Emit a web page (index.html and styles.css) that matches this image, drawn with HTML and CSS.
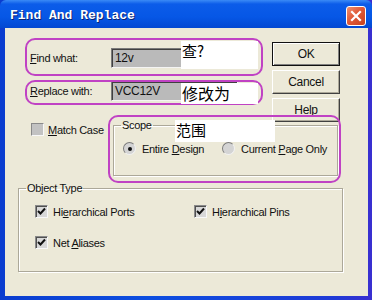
FILE: index.html
```html
<!DOCTYPE html>
<html lang="en">
<head>
  <meta charset="UTF-8" />
  <meta name="viewport" content="width=device-width, initial-scale=1.0"/>
  <title>Find And Replace</title>
  <link rel="stylesheet" href="styles.css">
</head>
<body>
  <div class="window">
    <div class="titlebar">
      <span class="title">Find And Replace</span>
      <span class="close">
        <svg width="12" height="12" viewBox="0 0 12 12"><path d="M2 2 L10 10 M10 2 L2 10" stroke="#fff" stroke-width="2.2" stroke-linecap="square"/></svg>
      </span>
    </div>

    <div class="client">
      <div class="top">
        <div class="fields">
          <div class="row">
            <span class="label"><u>F</u>ind what:</span>
            <div class="textbox">12v</div>
          </div>
          <div class="row">
            <span class="label"><u>R</u>eplace with:</span>
            <div class="textbox">VCC12V</div>
          </div>
        </div>
        <div class="buttons">
          <div class="btn default">OK</div>
          <div class="btn">Cancel</div>
          <div class="btn"><u>H</u>elp</div>
        </div>
      </div>

      <div class="middle">
        <div class="check match"><span class="box"></span><span><u>M</u>atch Case</span></div>
        <fieldset class="scope">
          <legend>Scope</legend>
          <div class="radios">
            <div class="radio first"><span class="dot on"></span><span>Entire <u>D</u>esign</span></div>
            <div class="radio"><span class="dot"></span><span>Current <u>P</u>age Only</span></div>
          </div>
        </fieldset>
      </div>

      <fieldset class="objtype">
        <legend>Object Type</legend>
        <div class="checks">
          <div class="check"><span class="box ticked"><svg width="9" height="9" viewBox="0 0 9 9"><path d="M1 4 L3.5 6.5 L8 1.5" fill="none" stroke="#111" stroke-width="2"/></svg></span><span>Hi<u>e</u>rarchical Ports</span></div>
          <div class="check"><span class="box ticked"><svg width="9" height="9" viewBox="0 0 9 9"><path d="M1 4 L3.5 6.5 L8 1.5" fill="none" stroke="#111" stroke-width="2"/></svg></span><span>H<u>i</u>erarchical Pins</span></div>
          <div class="check"><span class="box ticked"><svg width="9" height="9" viewBox="0 0 9 9"><path d="M1 4 L3.5 6.5 L8 1.5" fill="none" stroke="#111" stroke-width="2"/></svg></span><span>Net <u>A</u>liases</span></div>
        </div>
      </fieldset>
    </div>

    <!-- hand-drawn notes over the dialog -->
    <div class="mark mark1"></div>
    <div class="mark mark2"></div>
    <div class="mark mark3"></div>
    <div class="tag tag1">查?</div>
    <div class="tag tag2">修改为</div>
    <div class="tag tag3">范围</div>
  </div>
</body>
</html>
```

FILE: styles.css
```css
body {
  margin: 0;
  font-family: "Liberation Sans", Arial, sans-serif;
  font-size: 11px;
  letter-spacing: -0.3px;
  color: #111;
  background: #fff;
}

.window {
  position: relative;
  width: 372px;
  height: 300px;
  box-sizing: border-box;
  padding: 0 4px 4px 5px;
  display: flex;
  flex-direction: column;
  background: linear-gradient(to right, #0a3ccf, #0c4ee0 40%, #1f3ad6 90%, #3a2fd0);
}

.titlebar {
  height: 28px;
  margin: 0 -4px 0 -5px;
  padding: 0 6px 0 10px;
  display: flex;
  align-items: center;
  justify-content: space-between;
  background: linear-gradient(to bottom, #3a8af6 0, #0c5ce9 4px, #0657e6 60%, #0348d2 100%);
  border-radius: 6px 6px 0 0;
}

.title {
  font-family: "Liberation Mono", "Courier New", monospace;
  font-weight: bold;
  font-size: 13px;
  letter-spacing: 0;
  color: #fff;
  text-shadow: 1px 1px 0 #0a2470;
  margin-top: 2px;
}

.close {
  width: 20px;
  height: 20px;
  box-sizing: border-box;
  margin-top: 4px;
  border: 1px solid #fff;
  border-radius: 3px;
  background: linear-gradient(135deg, #f0906e, #e05a38 45%, #c8401e);
  display: flex;
  align-items: center;
  justify-content: center;
}

.client {
  flex: 1;
  background: #ece9d8;
}

.top {
  display: flex;
}

.fields {
  width: 267px;
  padding: 20px 0 0 25px;
  box-sizing: border-box;
}

.row {
  display: flex;
  align-items: center;
  height: 20px;
}

.row + .row {
  margin-top: 13px;
}

.label {
  width: 81px;
}

.textbox {
  width: 127px;
  height: 20px;
  box-sizing: border-box;
  padding: 0 3px;
  display: flex;
  align-items: center;
  font-size: 12px;
  background: #bababa;
  border: 1px solid;
  border-color: #7a7a7a #f4f4f4 #f4f4f4 #7a7a7a;
  box-shadow: inset 1px 1px 0 #404040;
}

.buttons {
  padding-top: 14px;
  display: flex;
  flex-direction: column;
  gap: 4px;
}

.btn {
  width: 68px;
  height: 24px;
  box-sizing: border-box;
  display: flex;
  align-items: center;
  justify-content: center;
  font-size: 12px;
  background: #ece9d8;
  border: 1px solid;
  border-color: #fff #404040 #404040 #fff;
  box-shadow: inset -1px -1px 0 #aca899;
}

.btn.default {
  border: 1px solid #111;
  box-shadow: inset 1px 1px 0 #fff, inset -1px -1px 0 #808080;
}

.middle {
  display: flex;
  align-items: flex-start;
  margin-top: -3px;
}

.check {
  display: flex;
  align-items: center;
  gap: 5px;
  height: 13px;
}

.match {
  width: 82px;
  margin: 4px 0 0 26px;
  gap: 4px;
}

.box {
  width: 13px;
  height: 13px;
  box-sizing: border-box;
  flex: none;
  display: flex;
  align-items: center;
  justify-content: center;
  background: #c2c2c2;
  border: 1px solid;
  border-color: #8a8a8a #f8f8f8 #f8f8f8 #8a8a8a;
}

.box.ticked {
  background: #d8d8d8;
  box-shadow: inset 1px 1px 0 #505050;
}

fieldset {
  margin: 0;
  box-sizing: border-box;
  border: 1px solid #aca899;
  box-shadow: 1px 1px 0 #fff, inset 1px 1px 0 #fff;
}

legend {
  line-height: 13px;
  padding: 0 1px;
  margin-left: -2px;
}

.scope {
  width: 225px;
  height: 57px;
  padding: 10px 9px 0;
}

.radios {
  display: flex;
}

.radio {
  display: flex;
  align-items: center;
  gap: 6px;
  height: 13px;
}

.radio.first {
  width: 99px;
}

.dot {
  width: 13px;
  height: 13px;
  box-sizing: border-box;
  border-radius: 50%;
  flex: none;
  display: flex;
  align-items: center;
  justify-content: center;
  background: #d4d4d4;
  border: 1px solid;
  border-color: #7c7c7c #f2f2f2 #f2f2f2 #7c7c7c;
}

.dot.on::after {
  content: "";
  width: 4px;
  height: 4px;
  border-radius: 50%;
  background: #111;
}

.objtype {
  width: 325px;
  height: 90px;
  margin: 6px 0 0 13px;
  padding: 10px 16px 0;
}

.objtype legend {
  margin-left: -9px;
}

.checks {
  display: grid;
  grid-template-columns: 159px auto;
  row-gap: 18px;
}

/* annotation layer */
.mark {
  position: absolute;
  box-sizing: border-box;
  border: 2px solid #c042c4;
  border-radius: 10px;
}

.mark1 { left: 25px; top: 38px; width: 238px; height: 38px; }
.mark2 { left: 25px; top: 80px; width: 238px; height: 25px; }
.mark3 { left: 108px; top: 115px; width: 233px; height: 68px; }

.tag {
  position: absolute;
  background: #fff;
  font-family: "Noto Sans CJK SC", sans-serif;
  font-size: 15px;
  letter-spacing: 0;
  line-height: 20px;
  color: #000;
  padding-left: 1px;
  box-sizing: border-box;
}

.tag1 { left: 181px; top: 41px; width: 77px; height: 28px; }
.tag2 { left: 181px; top: 83px; width: 77px; height: 21px; font-size: 16px; }
.tag3 { left: 175px; top: 120px; width: 100px; height: 22px; }
```
